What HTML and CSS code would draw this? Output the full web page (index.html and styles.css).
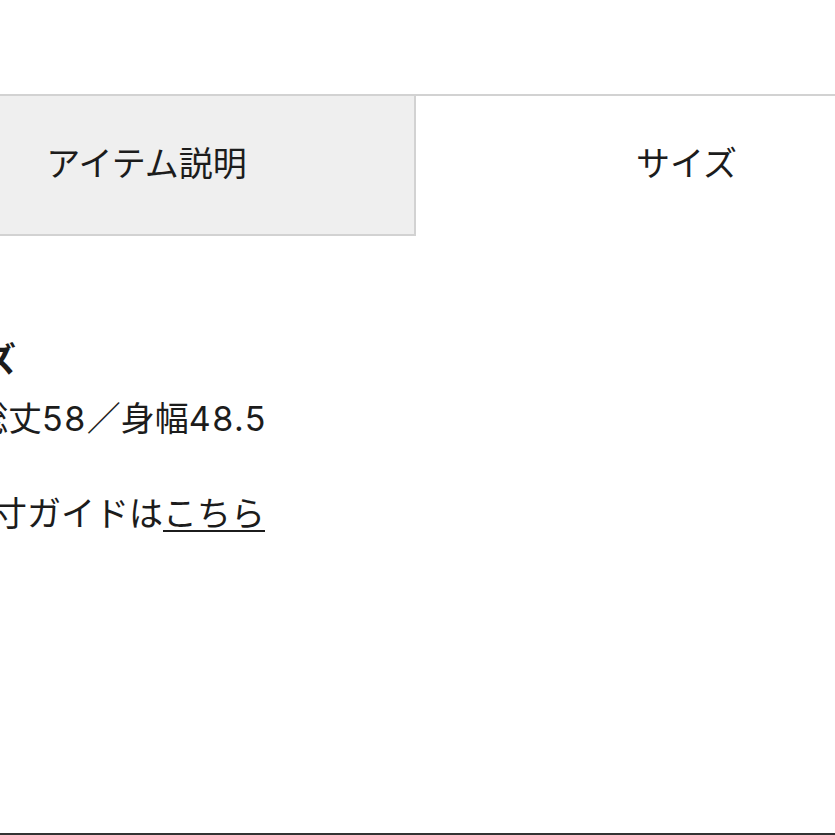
FILE: index.html
```html
<!DOCTYPE html>
<html lang="ja">
<head>
<meta charset="utf-8">
<link rel="stylesheet" href="styles.css">
</head>
<body>
<div class="page">
  <div class="tabs">
    <div class="tab tab-off">アイテム説明</div>
    <div class="tab tab-on">サイズ</div>
  </div>
  <div class="content">
    <div class="heading">サイズ</div>
    <div class="line line-size">総丈<span class="num">58</span>／身幅<span class="num">48.5</span></div>
    <div class="line line-guide">採寸ガイドは<a class="link" href="#">こちら</a></div>
  </div>
  <div class="bottom-rule"></div>
</div>
</body>
</html>
```
FILE: styles.css
```css
html, body {
  margin: 0;
  padding: 0;
  background: #ffffff;
}
body {
  width: 835px;
  height: 835px;
  overflow: hidden;
  font-family: "Noto Sans CJK JP", "Noto Sans", sans-serif;
  color: #1c1c1c;
}
.page {
  margin-left: -121px;
  width: 1078px;
  padding-top: 94px;
  height: 741px;
  display: flex;
  flex-direction: column;
}
.tabs {
  display: flex;
  border-top: 2px solid #d2d2d2;
}
.tab {
  box-sizing: border-box;
  height: 138px;
  padding-bottom: 8px;
  display: flex;
  align-items: center;
  justify-content: center;
  font-size: 34px;
}
.tab-off {
  width: 537px;
  height: 140px;
  background: #efefef;
  border-right: 2px solid #d2d2d2;
  border-bottom: 2px solid #d2d2d2;
}
.tab-on {
  width: 541px;
  background: #ffffff;
}
.content {
  flex: 1;
  padding-top: 98px;
  font-size: 34px;
}
.heading {
  font-weight: bold;
  line-height: 48px;
  margin-left: 36px;
  margin-bottom: 11px;
}
.line {
  line-height: 48px;
}
.num {
  font-family: Inter, "Noto Sans", sans-serif;
  letter-spacing: 1.5px;
}
.line-size {
  margin-left: 95px;
}
.line-guide {
  margin-top: 45px;
  margin-left: 80px;
}
.link {
  color: #1c1c1c;
  text-decoration: underline;
  text-decoration-thickness: 2px;
  text-underline-offset: 4px;
}
.bottom-rule {
  height: 2px;
  background: #333333;
}
```
